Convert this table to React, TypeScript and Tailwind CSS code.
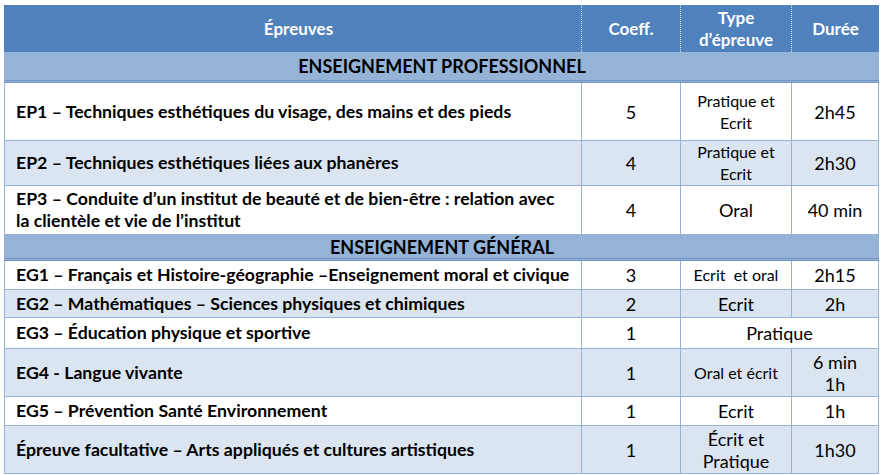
import React from 'react';

type Row = {
  label: React.ReactNode;
  coeff: string;
  type?: React.ReactNode;
  typeSmall?: boolean;
  duree?: React.ReactNode;
  span?: boolean;
  h: string;
  shaded?: boolean;
};

type Section = { title: string; h: string; rows: Row[] };

const sections: Section[] = [
  {
    title: 'ENSEIGNEMENT PROFESSIONNEL',
    h: 'h-[31px]',
    rows: [
      {
        label: 'EP1 – Techniques esthétiques du visage, des mains et des pieds',
        coeff: '5',
        type: (
          <>
            Pratique et
            <br />
            Ecrit
          </>
        ),
        typeSmall: true,
        duree: '2h45',
        h: 'h-[58px]',
      },
      {
        label: 'EP2 – Techniques esthétiques liées aux phanères',
        coeff: '4',
        type: (
          <>
            Pratique et
            <br />
            Ecrit
          </>
        ),
        typeSmall: true,
        duree: '2h30',
        h: 'h-[43px]',
        shaded: true,
      },
      {
        label: (
          <>
            EP3 – Conduite d’un institut de beauté et de bien-être : relation avec
            <br />
            la clientèle et vie de l’institut
          </>
        ),
        coeff: '4',
        type: 'Oral',
        duree: '40 min',
        h: 'h-[49px]',
      },
    ],
  },
  {
    title: 'ENSEIGNEMENT GÉNÉRAL',
    h: 'h-[26px]',
    rows: [
      {
        label: 'EG1 – Français et Histoire-géographie –Enseignement moral et civique',
        coeff: '3',
        type: 'Ecrit\u00a0 et oral',
        typeSmall: true,
        duree: '2h15',
        h: 'h-[29px]',
      },
      {
        label: 'EG2 – Mathématiques – Sciences physiques et chimiques',
        coeff: '2',
        type: 'Ecrit',
        duree: '2h',
        h: 'h-[28px]',
        shaded: true,
      },
      {
        label: 'EG3 – Éducation physique et sportive',
        coeff: '1',
        type: 'Pratique',
        span: true,
        h: 'h-[31px]',
      },
      {
        label: 'EG4 - Langue vivante',
        coeff: '1',
        type: 'Oral et écrit',
        typeSmall: true,
        duree: (
          <>
            6 min
            <br />
            1h
          </>
        ),
        h: 'h-[48px]',
        shaded: true,
      },
      {
        label: 'EG5 – Prévention Santé Environnement',
        coeff: '1',
        type: 'Ecrit',
        duree: '1h',
        h: 'h-[29px]',
      },
      {
        label: 'Épreuve facultative – Arts appliqués et cultures artistiques',
        coeff: '1',
        type: (
          <>
            Écrit et
            <br />
            Pratique
          </>
        ),
        duree: '1h30',
        h: 'h-[48px]',
        shaded: true,
      },
    ],
  },
];

const cell = 'border-b border-r border-[#95b3d7] align-middle';

export default function App() {
  return (
    <div className="bg-white w-[884px] h-[475px] pt-[5px] pl-[4px] font-['Lato','Liberation_Sans',sans-serif] text-black">
      <table className="w-[875px] table-fixed border-separate border-spacing-0 text-[18px] leading-[22px]">
        <colgroup>
          <col className="w-[578px]" />
          <col className="w-[99px]" />
          <col className="w-[111px]" />
          <col className="w-[87px]" />
        </colgroup>
        <thead>
          <tr className="h-[47px] bg-[#4f81bd] text-white font-bold text-[17px]">
            <th className="border-r border-dotted border-white/80 text-center font-bold pl-[12px]">
              Épreuves
            </th>
            <th className="border-r border-dotted border-white/80 text-center font-bold">
              Coeff.
            </th>
            <th className="border-r border-dotted border-white/80 text-center font-bold">
              Type
              <br />
              d’épreuve
            </th>
            <th className="text-center font-bold">Durée</th>
          </tr>
        </thead>
        <tbody>
          {sections.map((s) => (
            <React.Fragment key={s.title}>
              <tr className={s.h}>
                <td
                  colSpan={4}
                  className="bg-[#95b3d7] text-center font-bold border-b-[3px] border-double border-[#6f93c2] border-l border-l-[#95b3d7]"
                >
                  {s.title}
                </td>
              </tr>
              {s.rows.map((r, i) => (
                <tr key={i} className={`${r.h} ${r.shaded ? 'bg-[#dbe5f1]' : 'bg-white'}`}>
                  <td className={`${cell} border-l pl-[11px] font-bold text-[17.7px]`}>{r.label}</td>
                  <td className={`${cell} text-center`}>{r.coeff}</td>
                  {r.span ? (
                    <td colSpan={2} className={`${cell} text-center`}>
                      {r.type}
                    </td>
                  ) : (
                    <>
                      <td className={`${cell} text-center ${r.typeSmall ? 'text-[16px]' : ''}`}>
                        {r.type}
                      </td>
                      <td className={`${cell} text-center`}>{r.duree}</td>
                    </>
                  )}
                </tr>
              ))}
            </React.Fragment>
          ))}
        </tbody>
      </table>
    </div>
  );
}
